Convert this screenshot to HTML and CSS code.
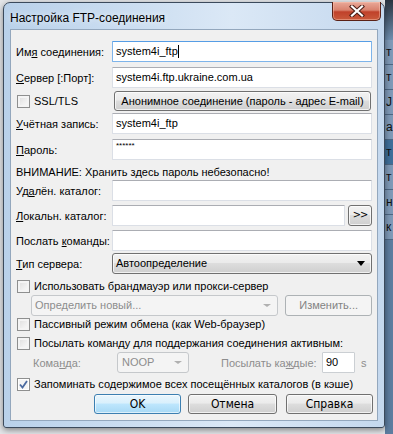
FILE: index.html
```html
<!DOCTYPE html>
<html lang="ru">
<head>
    <meta charset="UTF-8">
    <title>Настройка FTP-соединения</title>
    <link rel="stylesheet" href="styles.css">
</head>
<body>
<div class="desktop">
    <div class="window">
        <!-- Title bar -->
        <div class="titlebar">
            <span class="title">Настройка FTP-соединения</span>
            <div class="close-btn">
                <svg width="16" height="12" viewBox="0 0 16 12">
                    <path d="M3 1.5 L13 10.5 M13 1.5 L3 10.5" stroke="#4a1e16" stroke-width="4.2" stroke-linecap="square"/>
                    <path d="M3 1.5 L13 10.5 M13 1.5 L3 10.5" stroke="#fff" stroke-width="2.2" stroke-linecap="square"/>
                </svg>
            </div>
        </div>

        <!-- Dialog body -->
        <div class="client">
            <div class="row">
                <span class="lbl">Им<u>я</u> соединения:</span>
                <div class="field focused">system4i_ftp<span class="caret"></span></div>
            </div>
            <div class="row">
                <span class="lbl"><u>С</u>ервер [:Порт]:</span>
                <div class="field">system4i.ftp.ukraine.com.ua</div>
            </div>
            <div class="row">
                <span class="check-line"><span class="checkbox"></span>SSL/TLS</span>
                <div class="btn btn-wide">Анонимное соединение (пароль - адрес E-mail)</div>
            </div>
            <div class="row">
                <span class="lbl"><u>У</u>чётная запись:</span>
                <div class="field">system4i_ftp</div>
            </div>
            <div class="row">
                <span class="lbl"><u>П</u>ароль:</span>
                <div class="field field-pass">******</div>
            </div>
            <div class="note">ВНИМАНИЕ: Хранить здесь пароль небезопасно!</div>
            <div class="row">
                <span class="lbl">Уд<u>а</u>лён. каталог:</span>
                <div class="field"></div>
            </div>
            <div class="row">
                <span class="lbl"><u>Л</u>окальн. каталог:</span>
                <div class="field-group">
                    <div class="field"></div>
                    <div class="btn btn-small">&gt;&gt;</div>
                </div>
            </div>
            <div class="row">
                <span class="lbl">Послать <u>к</u>оманды:</span>
                <div class="field"></div>
            </div>
            <div class="row">
                <span class="lbl"><u>Т</u>ип сервера:</span>
                <div class="combo">Автоопределение<span class="arrow"></span></div>
            </div>
            <div class="check-line"><span class="checkbox"></span>Использовать брандмауэр или прокси-сервер</div>
            <div class="sub-row">
                <div class="combo disabled combo-proxy">Определить новый...<span class="arrow"></span></div>
                <div class="btn btn-disabled btn-edit">Изменить...</div>
            </div>
            <div class="check-line"><span class="checkbox"></span>Пассивный режим обмена (как Web-браузер)</div>
            <div class="check-line"><span class="checkbox"></span>Посылать команду для поддержания соединения активным:</div>
            <div class="keep-row">
                <span class="dim-lbl cmd-lbl">Кома<u>н</u>да:</span>
                <div class="combo disabled combo-noop">NOOP<span class="arrow"></span></div>
                <span class="dim-lbl every-lbl">Посылать ка<u>ж</u>дые:</span>
                <div class="field field-num">90</div>
                <span class="dim-lbl">s</span>
            </div>
            <div class="check-line"><span class="checkbox checked">
                <svg width="9" height="9" viewBox="0 0 9 9"><path d="M1 4.5 L3.5 7.5 L8 1" fill="none" stroke="#4b6aa0" stroke-width="1.8"/></svg>
            </span>Запоминать содержимое всех посещённых каталогов (в кэше)</div>
            <div class="actions">
                <div class="btn btn-dialog btn-default">OK</div>
                <div class="btn btn-dialog btn-cancel">Отмена</div>
                <div class="btn btn-dialog">Справка</div>
            </div>
        </div>
    </div>

    <!-- Window behind the dialog -->
    <div class="behind">
        <div class="behind-top"></div>
        <div class="behind-item">т</div>
        <div class="behind-item">т</div>
        <div class="behind-item">J</div>
        <div class="behind-item">а</div>
        <div class="behind-item dark">т</div>
        <div class="behind-item">т</div>
        <div class="behind-item">н</div>
        <div class="behind-item">к</div>
    </div>
</div>
</body>
</html>
```

FILE: styles.css
```css
/* General */
body {
    margin: 0;
    background: #e4e6e9;
    font-family: 'Liberation Sans', Arial, sans-serif;
    font-size: 11px;
    color: #000;
    width: 393px;
    height: 434px;
    overflow: hidden;
}

.desktop {
    display: flex;
    align-items: flex-start;
    height: 434px;
}

/* Window frame */
.window {
    flex: none;
    width: 382px;
    height: 426px;
    margin: 2px 0 0 3px;
    padding: 0 6px 6px 6px;
    box-sizing: border-box;
    border: 1px solid #3b4a5c;
    border-radius: 7px 7px 3px 3px;
    background: linear-gradient(to right, #b9d1ea 0%, #cfe0f2 40%, #dbe8f6 60%, #c4d8ee 100%);
    box-shadow: 0 2px 6px rgba(0, 0, 0, 0.45);
    display: flex;
    flex-direction: column;
    position: relative;
    z-index: 2;
}

.titlebar {
    height: 26px;
    display: flex;
    justify-content: space-between;
    align-items: flex-start;
}
.title {
    font-family: 'Liberation Sans', Arial, sans-serif;
    font-size: 12px;
    margin-top: 8px;
    text-shadow: 0 0 6px rgba(255, 255, 255, 0.9);
}
.close-btn {
    width: 47px;
    height: 18px;
    margin: -1px -3px 0 0;
    border: 1px solid #5a2116;
    border-top: none;
    border-radius: 0 0 5px 5px;
    background: linear-gradient(#e9a999 0%, #d9826e 45%, #c0412a 55%, #c95a3c 100%);
    box-shadow: inset 0 0 0 1px rgba(255, 200, 180, 0.45);
    display: flex;
    align-items: center;
    justify-content: center;
}

/* Client area */
.client {
    flex: 1;
    min-width: 0;
    background: #f0f0f0;
    border: 1px solid #93a7bd;
    padding: 11px 5px 0 5px;
    display: grid;
    grid-template-columns: minmax(0, 1fr);
    grid-template-rows: 26px 24px 22px 26px 25px 16px 25px 25px 23px 26px 16px 22px 19px 16px 25px 17px 20px;
    align-items: start;
}

.row {
    display: grid;
    grid-template-columns: 96px minmax(0, 1fr);
    align-items: center;
    white-space: nowrap;
}
.lbl u, .dim-lbl u {
    text-decoration: underline;
}

.field {
    height: 21px;
    box-sizing: border-box;
    background: #fff;
    border: 1px solid #dbdfe6;
    border-top-color: #abadb3;
    border-radius: 1px;
    padding: 0 3px;
    line-height: 19px;
    white-space: nowrap;
    overflow: hidden;
}
.field.focused {
    border-color: #7eb4ea;
    border-top-color: #569de5;
}
.caret {
    display: inline-block;
    width: 1px;
    height: 13px;
    background: #000;
    vertical-align: -3px;
}
.field-pass {
    font-size: 8px;
    line-height: 12px;
}

.note {
    line-height: 14px;
    margin-top: 1px;
}

.field-group {
    display: flex;
    gap: 3px;
}
.field-group .field {
    flex: 1;
}

/* Buttons */
.btn {
    box-sizing: border-box;
    height: 20px;
    border: 1px solid #707070;
    border-radius: 3px;
    background: linear-gradient(#f2f2f2 0%, #ebebeb 45%, #dddddd 50%, #cfcfcf 100%);
    box-shadow: inset 0 0 0 1px rgba(255, 255, 255, 0.7);
    text-align: center;
    line-height: 18px;
    white-space: nowrap;
}
.btn-wide {
    margin: 0 1px 0 2px;
}
.btn-small {
    width: 24px;
    height: 21px;
    font-family: 'DejaVu Sans Condensed', 'DejaVu Sans', sans-serif;
    font-size: 11px;
    letter-spacing: -1px;
}
.btn-disabled {
    border-color: #adb2b5;
    background: #f4f4f4;
    color: #838383;
    box-shadow: none;
}
.btn-dialog {
    width: 87px;
    height: 20px;
    font-family: 'DejaVu Sans Condensed', 'DejaVu Sans', sans-serif;
    font-size: 12px;
    font-weight: 300;
}
.btn-cancel {
    width: 89px;
}
.btn-default {
    border-color: #3c7fb1;
    background: linear-gradient(#eaf6fd 0%, #d9f0fc 45%, #bee6fd 50%, #a7d9f5 100%);
    box-shadow: inset 0 0 0 1px rgba(255, 255, 255, 0.6);
}

/* Combo boxes */
.combo {
    position: relative;
    box-sizing: border-box;
    height: 21px;
    border: 1px solid #707070;
    border-radius: 3px;
    background: linear-gradient(#f2f2f2 0%, #ebebeb 45%, #dddddd 50%, #cfcfcf 100%);
    box-shadow: inset 0 0 0 1px rgba(255, 255, 255, 0.7);
    padding-left: 3px;
    line-height: 19px;
    white-space: nowrap;
}
.arrow {
    position: absolute;
    right: 6px;
    top: 7px;
    border-left: 4px solid transparent;
    border-right: 4px solid transparent;
    border-top: 5px solid #000;
}
.combo.disabled {
    border-color: #c5c8cb;
    background: #f4f4f4;
    box-shadow: none;
    color: #8d8d8d;
}
.combo.disabled .arrow {
    border-top-color: #b0b0b0;
    border-top-width: 3px;
    top: 8px;
}

/* Checkboxes */
.check-line {
    display: flex;
    align-items: center;
    gap: 4px;
    padding-left: 1px;
    line-height: 14px;
    white-space: nowrap;
}
.checkbox {
    width: 13px;
    height: 13px;
    box-sizing: border-box;
    border: 1px solid #8e8f8f;
    background: linear-gradient(135deg, #dcdcdc 0%, #f0f0f0 60%, #fbfbfb 100%);
    box-shadow: inset 0 0 0 2px #f4f4f4;
    display: flex;
    align-items: center;
    justify-content: center;
    flex: none;
}
.checkbox.checked {
    background: #f4f4f4;
    box-shadow: inset 0 0 0 1px #fff;
}

/* Proxy row */
.sub-row {
    display: flex;
    padding-left: 15px;
    gap: 7px;
}
.combo-proxy {
    width: 248px;
}
.btn-edit {
    width: 87px;
    height: 21px;
    line-height: 19px;
}

/* Keep-alive row */
.keep-row {
    display: flex;
    align-items: center;
    padding-left: 17px;
    height: 21px;
    white-space: nowrap;
}
.dim-lbl {
    color: #8d8d8d;
}
.cmd-lbl {
    width: 84px;
}
.combo-noop {
    width: 72px;
    height: 21px;
    padding-left: 4px;
}
.every-lbl {
    width: 101px;
    margin-left: 32px;
}
.field-num {
    width: 33px;
    border-color: #cbcfd3;
    padding-left: 3px;
    margin-right: 6px;
}

/* Bottom buttons */
.actions {
    display: flex;
    justify-content: flex-end;
    gap: 7px;
    margin-right: -1px;
}
.actions .btn-cancel {
    margin-right: 2px;
}

/* Window behind the dialog */
.behind {
    flex: 1;
    height: 434px;
    background: #5d7da0;
    display: flex;
    flex-direction: column;
    overflow: hidden;
    font-size: 12px;
}
.behind-top {
    height: 40px;
    background: linear-gradient(#2b3440, #6f8fb0);
}
.behind-item {
    height: 24px;
    line-height: 24px;
    background: #7f9ab8;
    border-bottom: 1px solid #4e6885;
    padding-left: 1px;
    color: #111;
}
.behind-item.dark {
    background: #3f6f9a;
}
```
